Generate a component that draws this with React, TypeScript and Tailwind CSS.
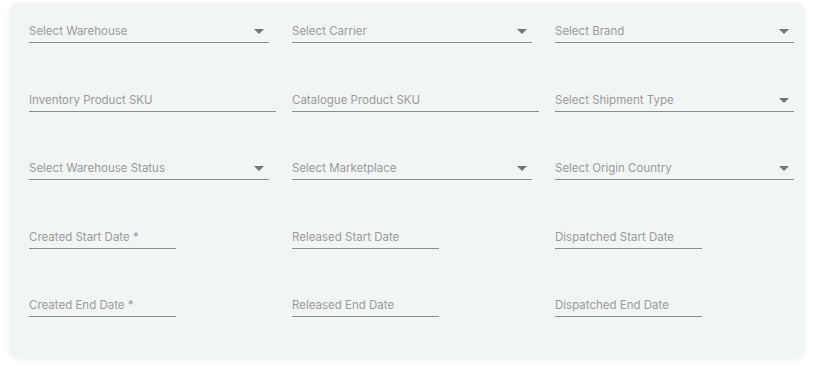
import React from "react";

const Arrow = () => (
  <svg width="10" height="5" viewBox="0 0 10 5" className="shrink-0">
    <path d="M0 0 L10 0 L5 5 Z" fill="#757575" />
  </svg>
);

const Select = ({ label, w = "w-[240px]" }: { label: string; w?: string }) => (
  <div className={`${w} h-[31px] flex items-end justify-between border-b border-[#8c8c8c] pb-[4px] pr-[5px]`}>
    <span className="text-[11.5px] leading-[14px] text-[#9b9b9b]">{label}</span>
    <div className="mb-[4px]"><Arrow /></div>
  </div>
);

const Input = ({ label, w = "w-[247px]" }: { label: string; w?: string }) => (
  <div className={`${w} h-[31px] flex items-end border-b border-[#8c8c8c] pb-[4px]`}>
    <span className="text-[11.5px] leading-[14px] text-[#9b9b9b]">{label}</span>
  </div>
);

export default function App() {
  return (
    <div className="w-[814px] h-[369px] bg-white pt-[3px] pl-[10px]" style={{ fontFamily: "Inter, 'Noto Sans', sans-serif" }}>
      <div className="w-[794px] h-[355px] bg-[#f1f5f4] rounded-[8px] shadow-[0_1px_6px_rgba(0,0,0,0.07)] pl-[19px] pt-[9px]">
        <div className="grid grid-cols-[247px_247px_247px] gap-x-[16px] gap-y-[37.5px]">
          <Select label="Select Warehouse" />
          <Select label="Select Carrier" />
          <Select label="Select Brand" w="w-[239px]" />
          <Input label="Inventory Product SKU" />
          <Input label="Catalogue Product SKU" />
          <Select label="Select Shipment Type" w="w-[239px]" />
          <Select label="Select Warehouse Status" />
          <Select label="Select Marketplace" />
          <Select label="Select Origin Country" w="w-[239px]" />
          <Input label="Created Start Date *" w="w-[147px]" />
          <Input label="Released Start Date" w="w-[147px]" />
          <Input label="Dispatched Start Date" w="w-[147px]" />
          <Input label="Created End Date *" w="w-[147px]" />
          <Input label="Released End Date" w="w-[147px]" />
          <Input label="Dispatched End Date" w="w-[147px]" />
        </div>
      </div>
    </div>
  );
}
